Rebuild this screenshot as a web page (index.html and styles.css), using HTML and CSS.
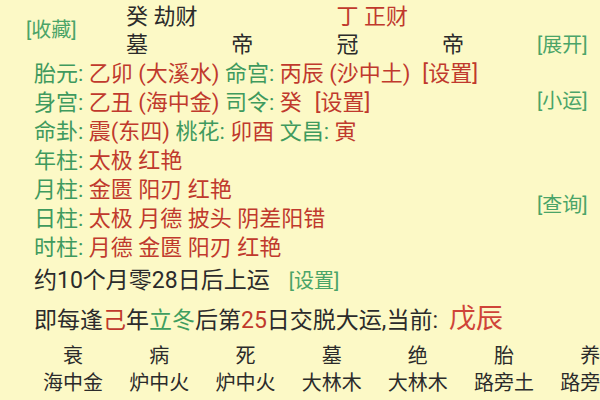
FILE: index.html
```html
<!DOCTYPE html>
<html lang="zh">
<head>
<meta charset="utf-8">
<link rel="stylesheet" href="styles.css">
</head>
<body>
<div class="top">
  <div class="main">
    <div class="head">
      <div class="btn fav">[收藏]</div>
      <div class="hc">癸 劫财</div>
      <div class="hc"></div>
      <div class="hc red">丁 正财</div>
      <div class="hc"></div>
      <div class="hc">墓</div>
      <div class="hc">帝</div>
      <div class="hc">冠</div>
      <div class="hc">帝</div>
    </div>
    <div class="row"><span class="lb">胎元: </span><span class="red">乙卯 (大溪水) </span><span class="lb">命宫: </span><span class="red">丙辰 (沙中土)</span><span class="red s1">[设置]</span></div>
    <div class="row"><span class="lb">身宫: </span><span class="red">乙丑 (海中金) </span><span class="lb">司令: </span><span class="red">癸</span><span class="red s2">[设置]</span></div>
    <div class="row"><span class="lb">命卦: </span><span class="red">震(东四) </span><span class="lb">桃花: </span><span class="red">卯酉 </span><span class="lb">文昌: </span><span class="red">寅</span></div>
    <div class="row"><span class="lb">年柱: </span><span class="red">太极 红艳</span></div>
    <div class="row"><span class="lb">月柱: </span><span class="red">金匮 阳刃 红艳</span></div>
    <div class="row"><span class="lb">日柱: </span><span class="red">太极 月德 披头 阴差阳错</span></div>
    <div class="row"><span class="lb">时柱: </span><span class="red">月德 金匮 阳刃 红艳</span></div>
  </div>
  <div class="aside">
    <div class="btn b1">[展开]</div>
    <div class="btn b2">[小运]</div>
    <div class="btn b3">[查询]</div>
  </div>
</div>
<div class="yun">约10个月零28日后上运<span class="set">[设置]</span></div>
<div class="jiao">即每逢<span class="red">己</span>年<span class="grn">立冬</span>后第<span class="red">25</span>日交脱大运,当前:<span class="cur">戊辰</span></div>
<div class="cols">
  <div>衰</div><div>病</div><div>死</div><div>墓</div><div>绝</div><div>胎</div><div>养</div>
  <div>海中金</div><div>炉中火</div><div>炉中火</div><div>大林木</div><div>大林木</div><div>路旁土</div><div>路旁土</div>
</div>
</body>
</html>
```
FILE: styles.css
```css
html, body {
  margin: 0;
  padding: 0;
}
body {
  width: 600px;
  height: 400px;
  overflow: hidden;
  background: #fcf9c6;
  color: #2b2b2b;
  font-family: Roboto, "Noto Sans CJK SC", sans-serif;
  font-size: 22px;
}
.red { color: #c0392d; }
.grn { color: #3f9e60; }
.lb { color: #3f9a5e; }
.top {
  display: flex;
}
.main {
  width: 537px;
}
.head {
  display: grid;
  grid-template-columns: 100px repeat(4, 105.3px);
  grid-template-rows: 28px 28px;
  padding-left: 26px;
  padding-top: 3px;
}
.hc {
  line-height: 28px;
  white-space: nowrap;
}
.btn {
  color: #4aa468;
  font-size: 20px;
  line-height: 28px;
  white-space: nowrap;
}
.fav {
  grid-row: 1 / span 2;
  align-self: center;
  margin-bottom: 2px;
}
.row {
  height: 29px;
  line-height: 29px;
  padding-left: 34px;
  white-space: nowrap;
}
.s1 { margin-left: 12px; }
.s2 { margin-left: 13px; }
.aside {
  display: flex;
  flex-direction: column;
}
.b1 { margin-top: 31px; }
.b2 { margin-top: 28px; }
.b3 { margin-top: 76px; }
.yun {
  height: 37px;
  line-height: 37px;
  padding-left: 34px;
  font-size: 23px;
  white-space: nowrap;
}
.set {
  color: #4aa468;
  font-size: 20px;
  margin-left: 19px;
}
.jiao {
  height: 40px;
  line-height: 40px;
  padding-left: 34px;
  font-size: 23px;
  white-space: nowrap;
}
.cur {
  color: #cf4438;
  font-size: 27px;
  margin-left: 11px;
}
.cols {
  display: grid;
  grid-template-columns: repeat(7, 86.2px);
  grid-auto-rows: 27px;
  padding-left: 30px;
  margin-top: 4px;
  font-size: 20px;
  line-height: 27px;
  text-align: center;
  white-space: nowrap;
}
```
